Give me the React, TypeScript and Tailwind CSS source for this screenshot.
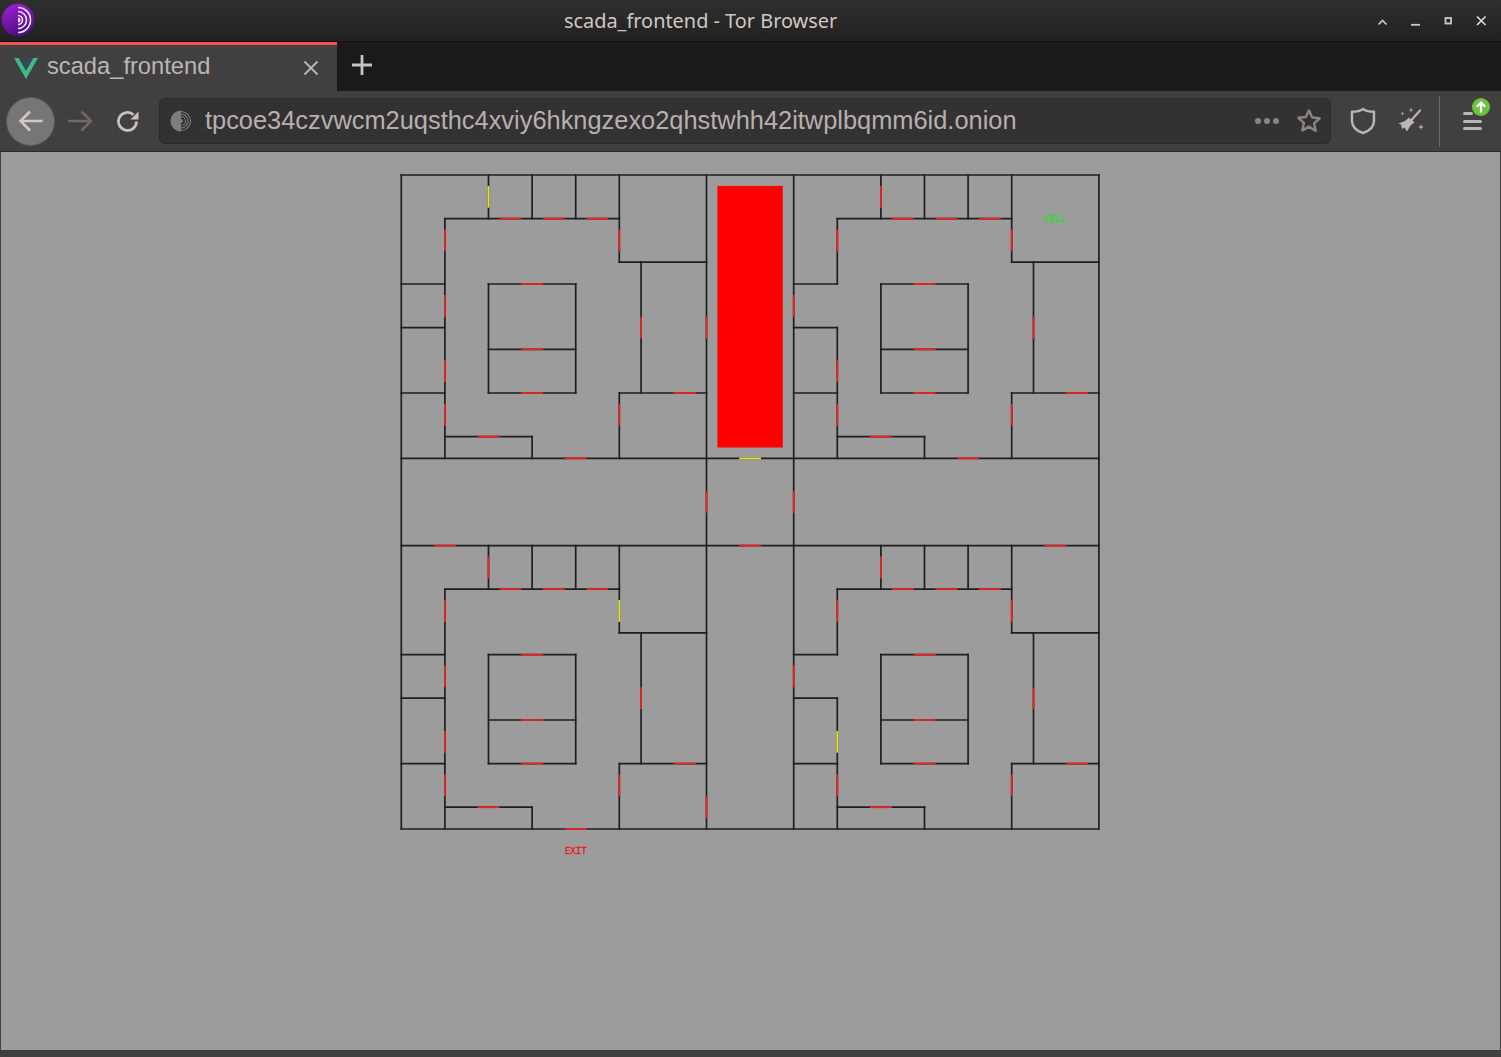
import React from "react";

const U = 21.8;
const X = (u: number) => 11.3 + U * u;
const Y = (v: number) => 11 + U * v;
const WALL = "#1f1f1f";
const RED = "#ee2222";
const YEL = "#e6e620";

type Seg = [number, number, number, number];

function quadrant(ox: number, oy: number): Seg[] {
  const w: Seg[] = [
    [ox + 4, oy, ox + 4, oy + 2],
    [ox + 6, oy, ox + 6, oy + 2],
    [ox + 8, oy, ox + 8, oy + 2],
    [ox + 10, oy, ox + 10, oy + 4],
    [ox + 2, oy + 2, ox + 10, oy + 2],
    [ox + 10, oy + 4, ox + 14, oy + 4],
    [ox + 11, oy + 4, ox + 11, oy + 10],
    [ox + 10, oy + 10, ox + 14, oy + 10],
    [ox + 10, oy + 10, ox + 10, oy + 13],
    [ox + 4, oy + 5, ox + 8, oy + 5],
    [ox + 4, oy + 8, ox + 8, oy + 8],
    [ox + 4, oy + 10, ox + 8, oy + 10],
    [ox + 4, oy + 5, ox + 4, oy + 10],
    [ox + 8, oy + 5, ox + 8, oy + 10],
    [ox + 2, oy + 12, ox + 6, oy + 12],
    [ox + 6, oy + 12, ox + 6, oy + 13],
    [ox, oy + 5, ox + 2, oy + 5],
    [ox, oy + 7, ox + 2, oy + 7],
    [ox, oy + 10, ox + 2, oy + 10],
  ];
  if (ox === 0) {
    w.push([ox + 2, oy + 2, ox + 2, oy + 13]);
  } else {
    w.push([ox + 2, oy + 2, ox + 2, oy + 5]);
    w.push([ox + 2, oy + 7, ox + 2, oy + 13]);
  }
  return w;
}

const walls: Seg[] = [
  [0, 0, 32, 0],
  [0, 0, 0, 30],
  [32, 0, 32, 30],
  [0, 30, 32, 30],
  [0, 13, 32, 13],
  [0, 17, 32, 17],
  [14, 0, 14, 30],
  [18, 0, 18, 30],
  ...quadrant(0, 0),
  ...quadrant(18, 0),
  ...quadrant(0, 17),
  ...quadrant(18, 17),
];

function quadH(ox: number, oy: number): [number, number, string][] {
  return [
    [ox + 4.5, oy + 2, RED],
    [ox + 6.5, oy + 2, RED],
    [ox + 8.5, oy + 2, RED],
    [ox + 5.5, oy + 5, RED],
    [ox + 5.5, oy + 8, RED],
    [ox + 5.5, oy + 10, RED],
    [ox + 3.5, oy + 12, RED],
    [ox + 12.5, oy + 10, RED],
    [ox + 7.5, oy + 13, RED],
  ];
}

const hDoors: [number, number, string][] = [
  ...quadH(0, 0),
  ...quadH(18, 0),
  ...quadH(0, 17),
  ...quadH(18, 17).filter((d) => d[1] !== 30),
  [15.5, 13, YEL],
  [1.5, 17, RED],
  [15.5, 17, RED],
  [29.5, 17, RED],
];

const vDoors: [number, number, string][] = [
  [4, 0.5, YEL],
  [22, 0.5, RED],
  [4, 17.5, RED],
  [22, 17.5, RED],
  [10, 2.5, RED],
  [28, 2.5, RED],
  [10, 19.5, YEL],
  [28, 19.5, RED],
  [10, 10.5, RED],
  [28, 10.5, RED],
  [10, 27.5, RED],
  [28, 27.5, RED],
  [11, 6.5, RED],
  [29, 6.5, RED],
  [11, 23.5, RED],
  [29, 23.5, RED],
  [14, 6.5, RED],
  [14, 14.5, RED],
  [14, 28.5, RED],
  [18, 5.5, RED],
  [18, 14.5, RED],
  [18, 22.5, RED],
  [2, 2.5, RED],
  [2, 5.5, RED],
  [2, 8.5, RED],
  [2, 10.5, RED],
  [20, 2.5, RED],
  [20, 8.5, RED],
  [20, 10.5, RED],
  [2, 19.5, RED],
  [2, 22.5, RED],
  [2, 25.5, RED],
  [2, 27.5, RED],
  [20, 19.5, RED],
  [20, 25.5, YEL],
  [20, 27.5, RED],
];

function FloorPlan() {
  return (
    <svg width="720" height="700" viewBox="0 0 720 700" className="block">
      <rect x={X(14.5)} y={Y(0.5)} width={U * 3} height={U * 12} fill="#ff0000" />
      {walls.map((s, i) => (
        <line
          key={i}
          x1={X(s[0])}
          y1={Y(s[1])}
          x2={X(s[2])}
          y2={Y(s[3])}
          stroke={WALL}
          strokeWidth="1.7"
          strokeLinecap="square"
        />
      ))}
      {hDoors.map((d, i) => (
        <line key={i} x1={X(d[0])} y1={Y(d[1])} x2={X(d[0] + 1)} y2={Y(d[1])} stroke={d[2]} strokeWidth="1.8" />
      ))}
      {vDoors.map((d, i) => (
        <line key={i} x1={X(d[0])} y1={Y(d[1])} x2={X(d[0])} y2={Y(d[1] + 1)} stroke={d[2]} strokeWidth="1.8" />
      ))}
      <text
        x={X(29.97)}
        y={Y(2) + 3}
        textAnchor="middle"
        fontSize="9.1"
        fill="#22e022"
        stroke="#22e022"
        strokeWidth="0.3"
        style={{ fontFamily: '"DejaVu Sans Mono", monospace' }}
      >
        CELL
      </text>
      <text
        x={X(8)}
        y={Y(31) + 3}
        textAnchor="middle"
        fontSize="9.1"
        fill="#f01818"
        stroke="#f01818"
        strokeWidth="0.3"
        style={{ fontFamily: '"DejaVu Sans Mono", monospace' }}
      >
        EXIT
      </text>
    </svg>
  );
}

function TorLogo() {
  return (
    <svg width="36" height="36" viewBox="0 0 36 36">
      <defs>
        <linearGradient id="tg" x1="0.3" y1="0" x2="0.6" y2="1">
          <stop offset="0" stopColor="#9a1fd6" />
          <stop offset="1" stopColor="#4a0e78" />
        </linearGradient>
      </defs>
      <circle cx="18" cy="19" r="16.3" fill="url(#tg)" />
      <g fill="none" stroke="#f0e4f6" strokeWidth="1.6">
        <path d="M18 6.5a12.5 12.5 0 0 1 0 25" />
        <path d="M18 10.5a8.5 8.5 0 0 1 0 17" />
        <path d="M18 14.5a4.5 4.5 0 0 1 0 9" />
      </g>
      <path d="M18 16.5a2.5 2.5 0 0 1 0 5z" fill="#f0e4f6" />
    </svg>
  );
}

function VueLogo() {
  return (
    <svg width="24" height="21" viewBox="0 0 24 21" className="shrink-0">
      <path d="M0 0h4.8L12 12.4 19.2 0H24L12 21z" fill="#41b883" />
      <path d="M4.8 0h4.4L12 4.8 14.8 0h4.4L12 12.4z" fill="#35495e" />
    </svg>
  );
}

function OnionIcon() {
  return (
    <svg width="22" height="22" viewBox="0 0 22 22" className="shrink-0">
      <circle cx="11" cy="11" r="10.5" fill="#2f2f2f" />
      <path d="M11 .5a10.5 10.5 0 0 0 0 21z" fill="#7d7d7d" />
      <g fill="none" stroke="#7d7d7d" strokeWidth="1.1">
        <path d="M11 1.5a9.5 9.5 0 0 1 0 19" />
        <path d="M11 4a7 7 0 0 1 0 14" />
        <path d="M11 6.5a4.5 4.5 0 0 1 0 9" />
      </g>
      <path d="M11 9a2 2 0 0 1 0 4z" fill="#7d7d7d" />
    </svg>
  );
}

function BroomIcon() {
  return (
    <svg width="28" height="28" viewBox="0 0 28 28" className="shrink-0">
      <path d="M23 3.5 14.5 13" stroke="#bdb5b3" strokeWidth="2.2" strokeLinecap="round" />
      <path d="M12 10.5 17.5 15.5 13.5 18.5 10 24.5 7.5 20.5 5 22 4 17.5 1.5 16.5 8 14z" fill="#bdb5b3" />
      <path d="M14 .5l.6 1.9 1.9.6-1.900.6-.6 1.900-.6-1.900-1.900-.6 1.900-.6zM24 17l.7 2.300 2.300.7-2.300.7-.7 2.300-.7-2.300-2.300-.7 2.300-.7zM5.500 4.500l.5 1.500 1.500.5-1.500.5-.5 1.500-.5-1.500-1.500-.5 1.500-.5z" fill="#bdb5b3" />
    </svg>
  );
}

export default function App() {
  return (
    <div className="flex h-[1057px] w-[1501px] flex-col overflow-hidden bg-[#404040] [font-family:'Liberation_Sans',Arial,sans-serif]">
      {/* title bar */}
      <div className="flex h-[41px] shrink-0 items-center bg-gradient-to-b from-[#2f2f2f] to-[#212121]">
        <div className="h-[36px] w-[36px] -translate-y-[2px]">
          <TorLogo />
        </div>
        <div className="ml-[528px] mt-[1px] text-[19.9px] leading-none text-[#cfc8c2] [font-family:'Noto_Sans',sans-serif]">
          scada_frontend - Tor Browser
        </div>
        <div className="ml-auto flex items-center">
          <svg width="33" height="20" viewBox="0 0 33 20">
            <path d="M12.5 13.5 16.5 9.5l4 4" fill="none" stroke="#cfc8c4" strokeWidth="1.7" />
          </svg>
          <svg width="33" height="20" viewBox="0 0 33 20">
            <path d="M12 13.8h9" stroke="#cfc8c4" strokeWidth="1.8" />
          </svg>
          <svg width="33" height="20" viewBox="0 0 33 20">
            <rect x="13.5" y="7" width="5.5" height="5.5" fill="none" stroke="#cfc8c4" strokeWidth="1.8" />
          </svg>
          <svg width="33" height="20" viewBox="0 0 33 20" className="mr-[3px]">
            <path d="M12 5.5l8.5 8.5M20.5 5.5 12 14" stroke="#e0dad6" strokeWidth="1.7" />
          </svg>
        </div>
      </div>

      {/* tab bar */}
      <div className="flex h-[50px] shrink-0 border-t border-[#111111] bg-[#1a1a1a]">
        <div className="flex w-[337px] items-center border-t-[3px] border-[#f25050] bg-[#404040] pl-[14px]">
          <VueLogo />
          <span className="ml-[9px] -mt-[3px] text-[23.7px] leading-none text-[#bdb6b4]">scada_frontend</span>
          <svg width="16" height="16" viewBox="0 0 16 16" className="ml-[93px]">
            <path d="M1.5 1.5l13 13M14.5 1.5l-13 13" stroke="#bdb6b4" strokeWidth="1.8" />
          </svg>
        </div>
        <div className="ml-[14px] flex items-center">
          <svg width="22" height="22" viewBox="0 0 22 22" className="-mt-[4px]">
            <path d="M11 1v20M1 11h20" stroke="#c8c2c0" strokeWidth="2.8" />
          </svg>
        </div>
      </div>

      {/* toolbar */}
      <div className="flex h-[61px] shrink-0 items-center border-b border-[#2b2b2b] bg-[#404040]">
        <div className="ml-[6px] flex h-[49px] w-[49px] shrink-0 items-center justify-center rounded-full border border-[#5a5a5a] bg-[#767676]">
          <svg width="28" height="24" viewBox="0 0 28 24">
            <path d="M13 2.5 3.5 12l9.5 9.5M3.5 12h22" fill="none" stroke="#d0cac6" strokeWidth="2.6" />
          </svg>
        </div>
        <svg width="26" height="24" viewBox="0 0 26 24" className="ml-[12px] shrink-0">
          <path d="M14.5 2.5 24 12l-9.5 9.5M24 12H1" fill="none" stroke="#6f6967" strokeWidth="2.5" />
        </svg>
        <svg width="24" height="24" viewBox="0 0 24 24" className="ml-[23px] shrink-0">
          <path d="M20.5 12.5a9 9 0 1 1-3-6.8" fill="none" stroke="#c8c0bc" strokeWidth="2.8" />
          <path d="M22.5 2.5v8h-8z" fill="#c8c0bc" />
        </svg>
        <div className="ml-[19px] flex h-[46px] min-w-0 flex-1 items-center rounded-[6px] border border-[#2b2b2b] bg-[#323232] pl-[10px] pr-[8px]">
          <OnionIcon />
          <span className="ml-[13px] whitespace-nowrap text-[25.4px] leading-none text-[#b7b0ae]">
            tpcoe34czvwcm2uqsthc4xviy6hkngzexo2qhstwhh42itwplbqmm6id.onion
          </span>
          <svg width="26" height="8" viewBox="0 0 26 8" className="ml-auto shrink-0">
            <circle cx="4" cy="4" r="3" fill="#8a8583" />
            <circle cx="13" cy="4" r="3" fill="#8a8583" />
            <circle cx="22" cy="4" r="3" fill="#8a8583" />
          </svg>
          <svg width="26" height="26" viewBox="0 0 26 26" className="ml-[16px] shrink-0">
            <path d="M13 2.5l3.2 7 7.5.8-5.600 5.100 1.600 7.500L13 18.600l-6.700 3.800 1.600-7.500-5.600-5.100 7.500-.8z" fill="none" stroke="#8a8583" strokeWidth="2.4" strokeLinejoin="round" />
          </svg>
        </div>
        <svg width="26" height="28" viewBox="0 0 26 28" className="ml-[19px] shrink-0">
          <path d="M13 2C9.5 4.5 5 4.8 2 4.8V14c0 6 5 10 11 12 6-2 11-6 11-12V4.800C21 4.800 16.500 4.500 13 2z" fill="none" stroke="#bdb5b3" strokeWidth="2.4" strokeLinejoin="round" />
        </svg>
        <div className="ml-[21px] shrink-0">
          <BroomIcon />
        </div>
        <div className="ml-[14px] h-[51px] w-px shrink-0 bg-[#6a6a6a]" />
        <div className="relative ml-[23px] mr-[19px] flex h-[18px] w-[19px] shrink-0 flex-col justify-between">
          <div className="h-[3px] w-[10px] rounded-full bg-[#bdb5b3]" />
          <div className="h-[3px] w-[19px] rounded-full bg-[#bdb5b3]" />
          <div className="h-[3px] w-[19px] rounded-full bg-[#bdb5b3]" />
          <svg width="18" height="18" viewBox="0 0 18 18" className="absolute -top-[14px] left-[9px]">
            <circle cx="9" cy="9" r="9" fill="#6cc43c" />
            <path d="M9 14.5V5M4.8 8.800 9 4.500l4.200 4.300" fill="none" stroke="#ffffff" strokeWidth="2.2" />
          </svg>
        </div>
      </div>

      {/* page */}
      <div className="mx-px h-[898px] shrink-0 overflow-hidden bg-[#9c9c9c] pl-[389px] pt-[12px]">
        <FloorPlan />
      </div>
    </div>
  );
}
